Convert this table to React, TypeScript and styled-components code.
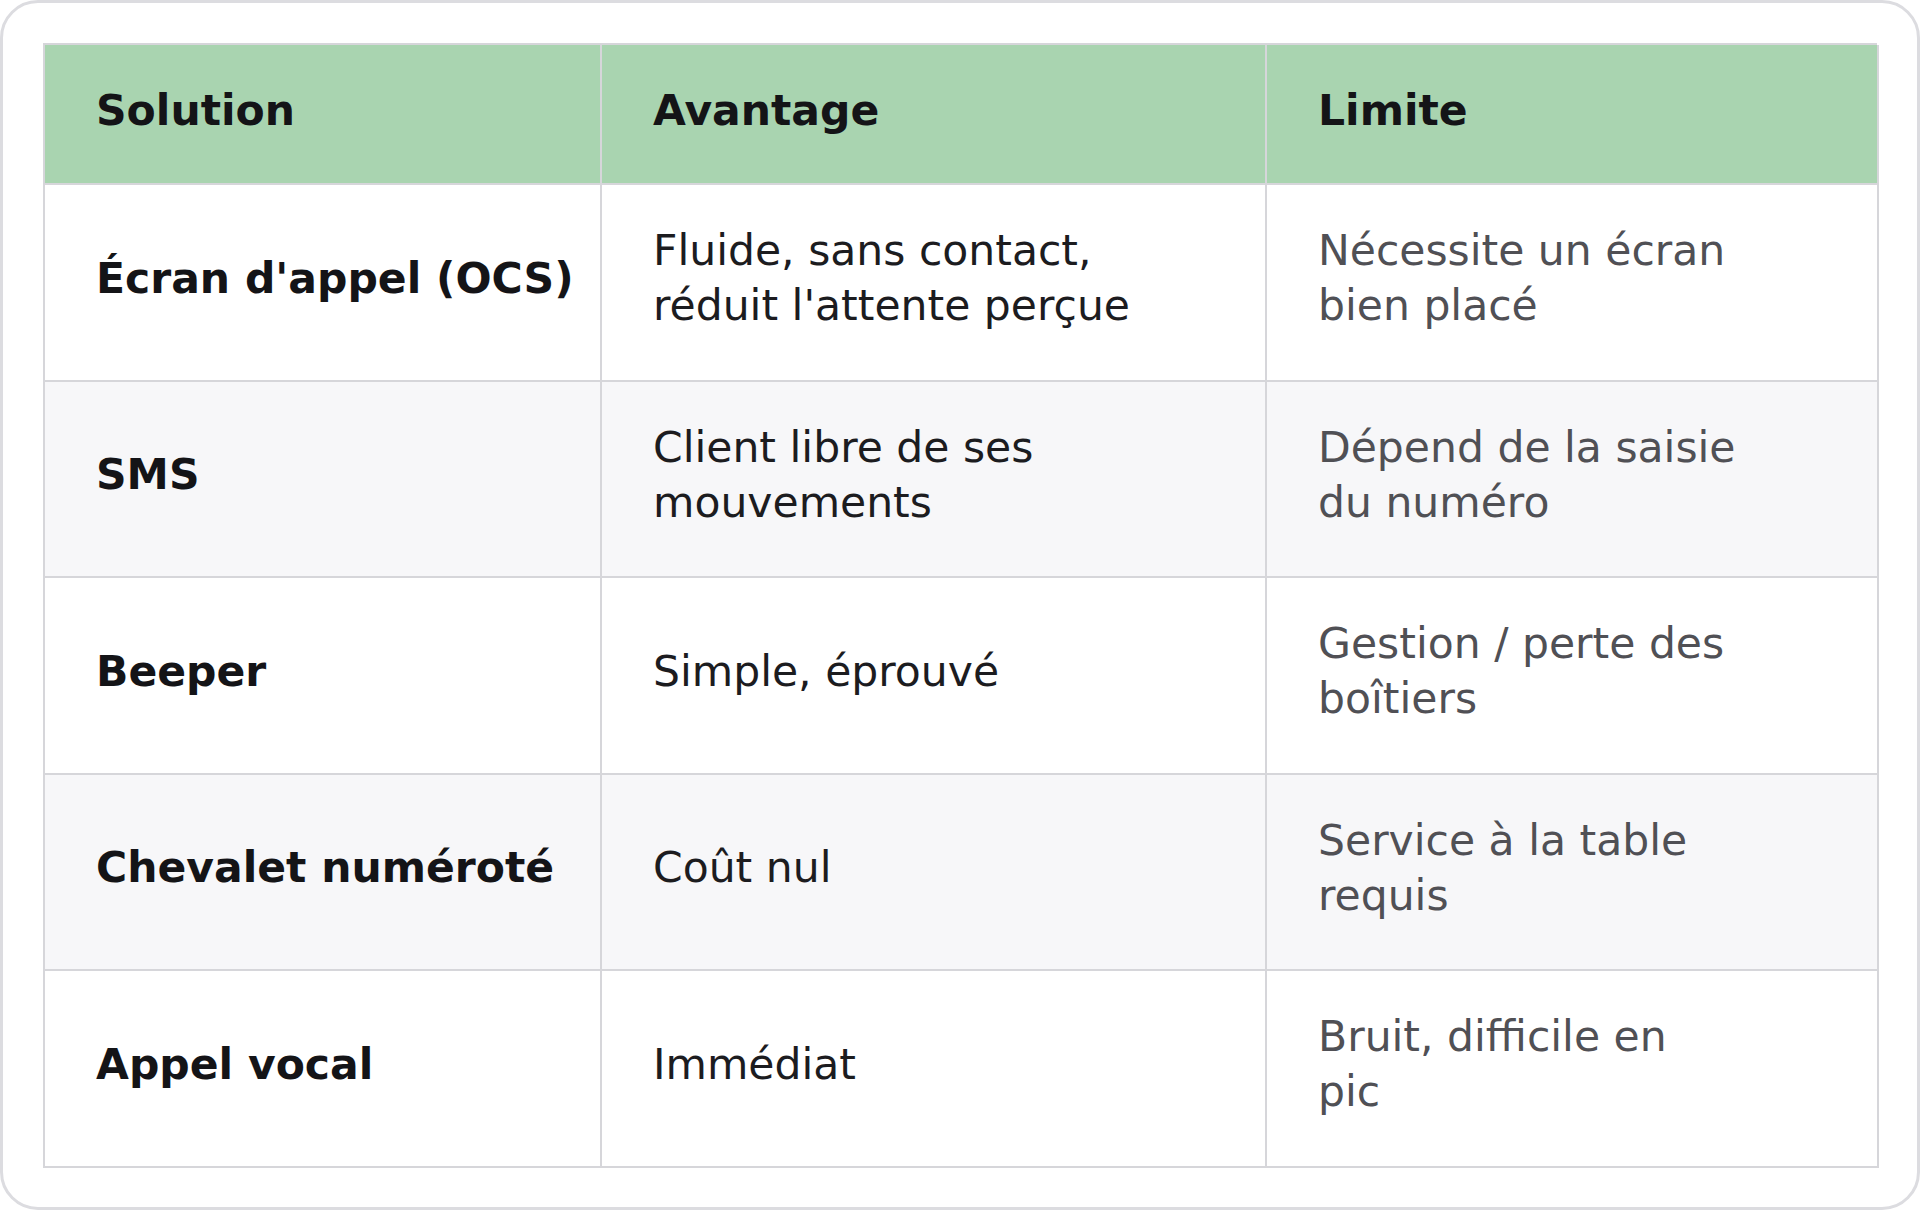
import React from 'react';
import styled, { createGlobalStyle } from 'styled-components';

const GlobalStyle = createGlobalStyle`
  html, body {
    margin: 0;
    padding: 0;
    background: #ffffff;
  }
  * {
    box-sizing: border-box;
  }
`;

const Card = styled.div`
  width: 1920px;
  height: 1210px;
  padding: 40px;
  background: #ffffff;
  border: 3px solid #dcdce0;
  border-radius: 38px;
  font-family: 'DejaVu Sans', Verdana, sans-serif;
`;

const Table = styled.div`
  display: grid;
  grid-template-columns: 557px 665px 612px;
  grid-template-rows: 140px repeat(5, 196.5px);
  border-top: 2px solid #d6d6da;
  border-left: 2px solid #d6d6da;
`;

const Cell = styled.div<{ $head?: boolean; $shade?: boolean }>`
  display: flex;
  align-items: center;
  padding: 0 16px 8px 51px;
  background: ${(p) => (p.$head ? '#a9d4b0' : p.$shade ? '#f7f7f9' : '#ffffff')};
  border-right: 2px solid #d6d6da;
  border-bottom: 2px solid #d6d6da;
  font-size: 42.5px;
  line-height: 55px;
`;

const HeadText = styled.span`
  font-weight: bold;
  color: #141417;
`;

const SolutionText = styled.span`
  font-weight: bold;
  color: #141417;
  white-space: nowrap;
`;

const AdvantageText = styled.span`
  color: #1c1c1f;
  max-width: 520px;
`;

const LimitText = styled.span`
  color: #505055;
  max-width: 418px;
`;

const rows = [
  {
    solution: "Écran d'appel (OCS)",
    advantage: "Fluide, sans contact, réduit l'attente perçue",
    limit: 'Nécessite un écran bien placé',
  },
  {
    solution: 'SMS',
    advantage: 'Client libre de ses mouvements',
    limit: 'Dépend de la saisie du numéro',
  },
  {
    solution: 'Beeper',
    advantage: 'Simple, éprouvé',
    limit: 'Gestion / perte des boîtiers',
  },
  {
    solution: 'Chevalet numéroté',
    advantage: 'Coût nul',
    limit: 'Service à la table requis',
  },
  {
    solution: 'Appel vocal',
    advantage: 'Immédiat',
    limit: 'Bruit, difficile en pic',
  },
];

const App = () => {
  return (
    <>
      <GlobalStyle />
      <Card>
        <Table>
          <Cell $head>
            <HeadText>Solution</HeadText>
          </Cell>
          <Cell $head>
            <HeadText>Avantage</HeadText>
          </Cell>
          <Cell $head>
            <HeadText>Limite</HeadText>
          </Cell>
          {rows.map((row, i) => (
            <React.Fragment key={row.solution}>
              <Cell $shade={i % 2 === 1}>
                <SolutionText>{row.solution}</SolutionText>
              </Cell>
              <Cell $shade={i % 2 === 1}>
                <AdvantageText>{row.advantage}</AdvantageText>
              </Cell>
              <Cell $shade={i % 2 === 1}>
                <LimitText>{row.limit}</LimitText>
              </Cell>
            </React.Fragment>
          ))}
        </Table>
      </Card>
    </>
  );
};

export default App;
